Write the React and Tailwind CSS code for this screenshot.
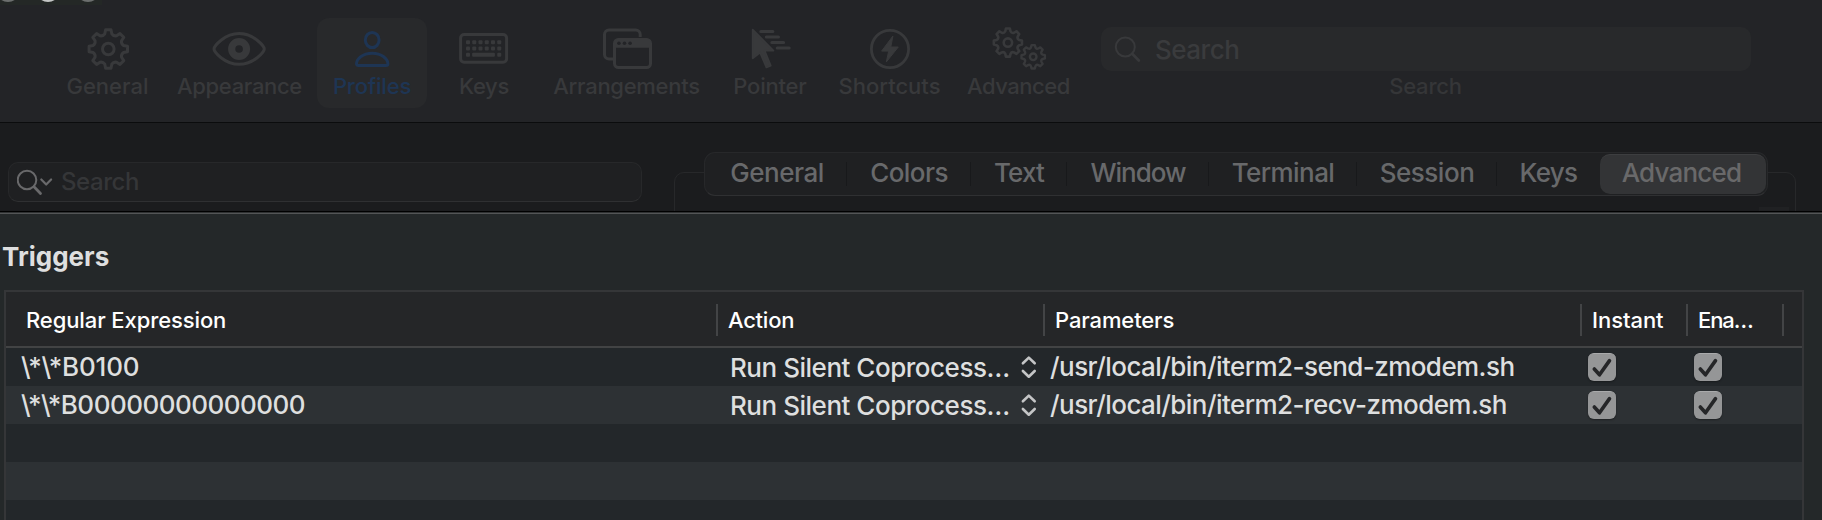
function gearPath(cx, cy, tip, root, teeth = 8) {
  const pt = (r, deg) => {
    const a = ((deg - 90) * Math.PI) / 180;
    return `${(cx + r * Math.cos(a)).toFixed(2)} ${(cy + r * Math.sin(a)).toFixed(2)}`;
  };
  const step = 360 / teeth;
  let d = '';
  for (let i = 0; i < teeth; i++) {
    const a = i * step;
    d += `${i ? 'L' : 'M'}${pt(tip, a - 8)} L${pt(tip, a + 8)} L${pt(root + 1, a + 13)} Q${pt(root - 0.9, a + step / 2)} ${pt(root + 1, a + step - 13)} `;
  }
  return d + 'Z';
}

const GeneralIcon = () => (
  <svg width="44" height="44" viewBox="0 0 44 44" fill="none" stroke="currentColor" strokeWidth="3" strokeLinejoin="round">
    <path d={gearPath(22.3, 22, 19.4, 14.6)} />
    <circle cx="22.3" cy="22" r="5.8" />
  </svg>
);

const AppearanceIcon = () => (
  <svg width="56" height="44" viewBox="0 0 56 44" fill="none" stroke="currentColor" strokeWidth="3" strokeLinejoin="round">
    <path d="M3 22c0-2.8 10.500-15.400 25.100-15.400S53.300 19.200 53.300 22 42.700 37.300 28.100 37.300 3 24.800 3 22Z" />
    <circle cx="28.100" cy="22" r="7.400" strokeWidth="7.200" />
  </svg>
);

const ProfilesIcon = () => (
  <svg width="44" height="44" viewBox="0 0 44 44" fill="none" stroke="currentColor" strokeWidth="3" strokeLinejoin="round">
    <ellipse cx="22.200" cy="13" rx="6.900" ry="7.600" />
    <path d="M8.400 38.500c-1.200 0-1.900-.6-1.900-1.700 0-4.600 6-10.600 15.700-10.600s15.700 6 15.700 10.600c0 1.100-.7 1.700-1.900 1.700Z" />
  </svg>
);

const KeysIcon = () => (
  <svg width="50" height="44" viewBox="0 0 50 44" fill="none" stroke="currentColor" strokeWidth="3">
    <rect x="1.600" y="7.500" width="46" height="27.800" rx="3.500" />
    <g fill="currentColor" stroke="none">
      {[0, 1, 2, 3, 4, 5].map((i) => (
        <rect key={i} x={7 + i * 6.250} y="13.200" width="4" height="4" rx="1" />
      ))}
      {[0, 1, 2, 3, 4, 5].map((i) => (
        <rect key={i} x={7 + i * 6.250} y="19.500" width="4" height="4" rx="1" />
      ))}
      <rect x="7" y="25.800" width="4" height="4" rx="1" />
      <rect x="13.100" y="25.800" width="22.800" height="4" rx="1" />
      <rect x="38.250" y="25.800" width="4" height="4" rx="1" />
    </g>
  </svg>
);

const ArrangementsIcon = () => (
  <svg width="50" height="44" viewBox="0 0 50 44" fill="none">
    <path d="M38.200 10V7.500a4.500 4.500 0 0 0-4.500-4.500H7a4.500 4.500 0 0 0-4.500 4.500v20A4.500 4.500 0 0 0 7 32h4.500" stroke="currentColor" strokeWidth="3" />
    <rect x="12.500" y="12.500" width="36" height="28" rx="4" stroke="currentColor" strokeWidth="3" />
    <path d="M12 20.800V16a4.500 4.500 0 0 1 4.500-4.500h28A4.500 4.500 0 0 1 49 16v4.800Z" fill="currentColor" />
    <g className="fill-[#232427]">
      <circle cx="16.900" cy="16.300" r="1.800" />
      <circle cx="22.500" cy="16.300" r="1.800" />
      <circle cx="28.100" cy="16.300" r="1.800" />
    </g>
  </svg>
);

const PointerIcon = () => (
  <svg width="44" height="44" viewBox="0 0 44 44" fill="currentColor" stroke="currentColor" strokeLinejoin="round">
    <path d="M3.700 2.700 24.400 23.600H15.600L21.700 38.600 17.400 40.300 11.100 25.600 3.700 31.300Z" strokeWidth="1.800" />
    <g fill="none" strokeWidth="3" strokeLinecap="round">
      <path d="M11.800 4.400h12.100M17.300 10h12.200M22.800 15.500h11.800M28.200 21.100h12" />
    </g>
  </svg>
);

const ShortcutsIcon = () => (
  <svg width="44" height="44" viewBox="0 0 44 44" fill="none">
    <circle cx="22" cy="22" r="18.600" stroke="currentColor" strokeWidth="2.800" />
    <path d="M24.900 9 13.600 24.100h7.100L18.300 35 30.300 20h-7.500Z" fill="currentColor" stroke="currentColor" strokeLinejoin="round" />
  </svg>
);

const AdvancedIcon = () => (
  <svg width="56" height="44" viewBox="0 0 56 44" fill="none" stroke="currentColor" strokeWidth="2.600" strokeLinejoin="round">
    <path d={gearPath(16.900, 15.600, 14.200, 10.600)} />
    <circle cx="16.900" cy="15.600" r="4.200" />
    <g strokeWidth="2.400">
      <path d={gearPath(42.200, 29.800, 11.800, 8.800)} />
      <circle cx="42.200" cy="29.800" r="3.300" />
    </g>
  </svg>
);

const toolbar = [
  { label: 'General', Icon: GeneralIcon, cls: 'w-[107px]', text: '' },
  { label: 'Appearance', Icon: AppearanceIcon, cls: 'w-[156px]', text: 'pl-px tracking-[-0.33px]' },
  { label: 'Profiles', Icon: ProfilesIcon, cls: 'w-[110px]', text: 'tracking-[-0.19px]', active: true },
  { label: 'Keys', Icon: KeysIcon, cls: 'w-[114px]', text: 'tracking-[-0.37px]' },
  { label: 'Arrangements', Icon: ArrangementsIcon, cls: 'w-[171px]', text: 'tracking-[-0.28px]' },
  { label: 'Pointer', Icon: PointerIcon, cls: 'w-[117px]', text: 'pr-px tracking-[-0.21px]' },
  { label: 'Shortcuts', Icon: ShortcutsIcon, cls: 'w-[122px]', text: 'pr-px' },
  { label: 'Advanced', Icon: AdvancedIcon, cls: 'w-[135px]', text: 'tracking-[-0.48px]' },
];

const tabs = [
  { label: 'General', cls: 'w-[142px] pl-[2px] tracking-[-0.46px]' },
  { label: 'Colors', cls: 'w-[124px] tracking-[-0.56px]' },
  { label: 'Text', cls: 'w-[96px] tracking-[-0.8px]' },
  { label: 'Window', cls: 'w-[142px] tracking-[-1px]' },
  { label: 'Terminal', cls: 'w-[148px] tracking-[-0.56px]' },
  { label: 'Session', cls: 'w-[140px] tracking-[-0.46px]' },
  { label: 'Keys', cls: 'w-[103px] tracking-[-0.7px]' },
];

const triggers = [
  { regex: '\\*\\*B0100', tracking: 'tracking-[-0.2px]', path: '/usr/local/bin/iterm2-send-zmodem.sh' },
  { regex: '\\*\\*B00000000000000', tracking: 'tracking-[-0.52px]', path: '/usr/local/bin/iterm2-recv-zmodem.sh' },
];

function Toolbar() {
  return (
    <header className="relative flex h-[122px] shrink-0 bg-[#232427] pl-[54px] text-[#38393b]">
      <svg className="absolute left-0 top-0" width="102" height="5" viewBox="0 0 102 5">
        <rect width="102" height="5" fill="#242826" />
        <circle cx="8" cy="-10" r="12" fill="#6c6f6e" />
        <circle cx="48" cy="-10" r="12" fill="#c4c6c5" />
        <circle cx="88" cy="-10" r="12" fill="#6c6f6e" />
      </svg>
      {toolbar.map(({ label, Icon, cls, text, active }) => (
        <div
          key={label}
          className={`${cls} mt-[18px] flex h-[90px] flex-col items-center pt-[9px] ${active ? 'rounded-xl bg-[#28292b] text-[#1e3554]' : ''}`}
        >
          <Icon />
          <span className={`text-[22px] font-medium leading-[30px] ${text}`}>{label}</span>
        </div>
      ))}
      <div className="ml-[15px] flex w-[650px] flex-col items-center pt-[27px]">
        <div className="flex h-11 w-full items-center rounded-[10px] bg-[#28292b] pl-[13px]">
          <svg width="28" height="28" viewBox="0 0 28 28" fill="none" stroke="currentColor">
            <circle cx="11.300" cy="12" r="9.500" strokeWidth="2" />
            <path d="m18.200 18.800 6.600 6.600" strokeWidth="2.800" strokeLinecap="round" />
          </svg>
          <span className="ml-[13px] pt-[2px] text-[26px] font-medium leading-[44px] tracking-[-0.5px] text-[#3a3b3d]">Search</span>
        </div>
        <span className="pr-px text-[22px] font-medium leading-[30px] tracking-[-0.21px] text-[#353638]">Search</span>
      </div>
    </header>
  );
}

function ProfilesArea() {
  return (
    <section className="flex h-[89px] shrink-0 items-start overflow-hidden border-t border-[#0b0c0d] bg-[#1b1c1e]">
      <div className="ml-2 mt-[39px] flex h-10 w-[634px] items-center rounded-[10px] border border-[#27282a] border-b-[#2f3032] bg-[#1f2022] pl-2">
        <svg width="38" height="28" viewBox="0 0 38 28" fill="none" stroke="#69696b">
          <circle cx="10" cy="12" r="9.300" strokeWidth="2" />
          <path d="m17 18.800 6.500 6.600" strokeWidth="2.800" strokeLinecap="round" />
          <path d="m24.300 11.500 4.900 5 4.900-5" strokeWidth="2.200" strokeLinecap="round" strokeLinejoin="round" />
        </svg>
        <span className="ml-[6px] text-[24px] font-medium leading-[38px] tracking-[-0.42px] text-[#353638]">Search</span>
      </div>
      <div className="ml-8 mt-[49px] h-20 w-[1122px] rounded-[10px] border border-[#27282a] pl-[29px]">
        <nav className="-mt-[21px] flex h-11 w-[1064px] rounded-[11px] border border-[#27282a] border-b-[#2f3032] bg-[#1f2022] text-[26px] font-medium leading-[40px] text-[#68696b]">
          {tabs.map(({ label, cls }, i) => (
            <div key={label} className={`${cls} relative text-center`}>
              {label}
              {i < tabs.length - 1 && <span className="absolute right-0 top-[9px] h-[24px] w-px bg-[#18191b]" />}
            </div>
          ))}
          <div className="mt-px h-10 w-[166px] rounded-[10px] border-t border-[#3d3e40] bg-[#333436] pr-[3px] text-center leading-[36px] tracking-[-0.8px] text-[#69696a]">
            Advanced
          </div>
        </nav>
        <div className="ml-[1055px] mt-[11px] h-8 w-[30px] bg-[#202123]" />
      </div>
    </section>
  );
}

function Checkbox() {
  return (
    <span className="flex size-7 items-center justify-center rounded-[6px] border-t border-[#a9aaab] bg-[#959697] shadow-[0_1px_2px_rgba(0,0,0,0.35)]">
      <svg width="28" height="28" viewBox="0 0 28 28" fill="none" stroke="#252628" strokeWidth="3.600" strokeLinecap="round" strokeLinejoin="round">
        <path d="m6.300 15 5.200 5.800L21.500 6.600" />
      </svg>
    </span>
  );
}

function HeaderCell({ children, cls }) {
  return (
    <div className={`${cls} flex items-center`}>
      <span className="flex-1 pt-[2px] leading-[28px]">{children}</span>
      <span className="mt-[2px] h-8 w-[2px] bg-[#434446]" />
    </div>
  );
}

function TriggersTable() {
  return (
    <div className="ml-1 mt-[14px] h-[240px] w-[1800px] shrink-0 border-2 border-[#353638]">
      <div className="flex h-14 border-b-2 border-[#424344] bg-[#252628] text-[22px] font-medium text-white">
        <HeaderCell cls="w-[712px] pl-[20px] tracking-[-0.1px]">Regular Expression</HeaderCell>
        <HeaderCell cls="w-[327px] pl-[10px] tracking-[-0.25px]">Action</HeaderCell>
        <HeaderCell cls="w-[537px] pl-[10px] tracking-[-0.12px]">Parameters</HeaderCell>
        <HeaderCell cls="w-[106px] pl-[10px] tracking-[-0.05px]">Instant</HeaderCell>
        <HeaderCell cls="w-[96px] pl-[10px] tracking-[-1.1px]">Ena…</HeaderCell>
      </div>
      {triggers.map(({ regex, tracking, path }) => (
        <div key={regex} className="flex h-[38px] text-[26px] font-medium leading-[38px] text-[#dedfdf] even:bg-[#23272a] odd:bg-[#2d3134]">
          <span className={`w-[724px] pl-[15px] ${tracking}`}>{regex}</span>
          <span className="w-[291px] pt-px tracking-[-0.48px]">Run Silent Coprocess…</span>
          <svg width="16" height="38" viewBox="0 0 16 38" fill="none" stroke="#c4c5c6" strokeWidth="2.600" strokeLinecap="round" strokeLinejoin="round">
            <path d="m1.900 15.300 5.900-5.700 5.900 5.700M1.900 23l5.900 5.700 5.900-5.700" />
          </svg>
          <span className="ml-[13px] w-[532px] tracking-[-0.56px]">{path}</span>
          <span className="ml-[6px] mt-[5px] w-[106px]"><Checkbox /></span>
          <span className="mt-[5px]"><Checkbox /></span>
        </div>
      ))}
      <div className="h-[38px] bg-[#23272a]" />
      <div className="h-[38px] bg-[#2d3134]" />
      <div className="h-[30px] bg-[#23272a]" />
    </div>
  );
}

export default function App() {
  return (
    <div className="flex h-[520px] w-[1822px] flex-col overflow-hidden bg-[#242829] font-['Inter','Liberation_Sans',sans-serif]">
      <Toolbar />
      <ProfilesArea />
      <main className="flex flex-1 flex-col overflow-hidden border-t border-black">
        <div className="h-[2px] shrink-0 border-b border-[#535556] bg-[#2f3132]" />
        <h1 className="ml-[2px] mt-6 text-[26px] font-bold leading-[38px] text-[#dedfdf]">Triggers</h1>
        <TriggersTable />
      </main>
    </div>
  );
}
